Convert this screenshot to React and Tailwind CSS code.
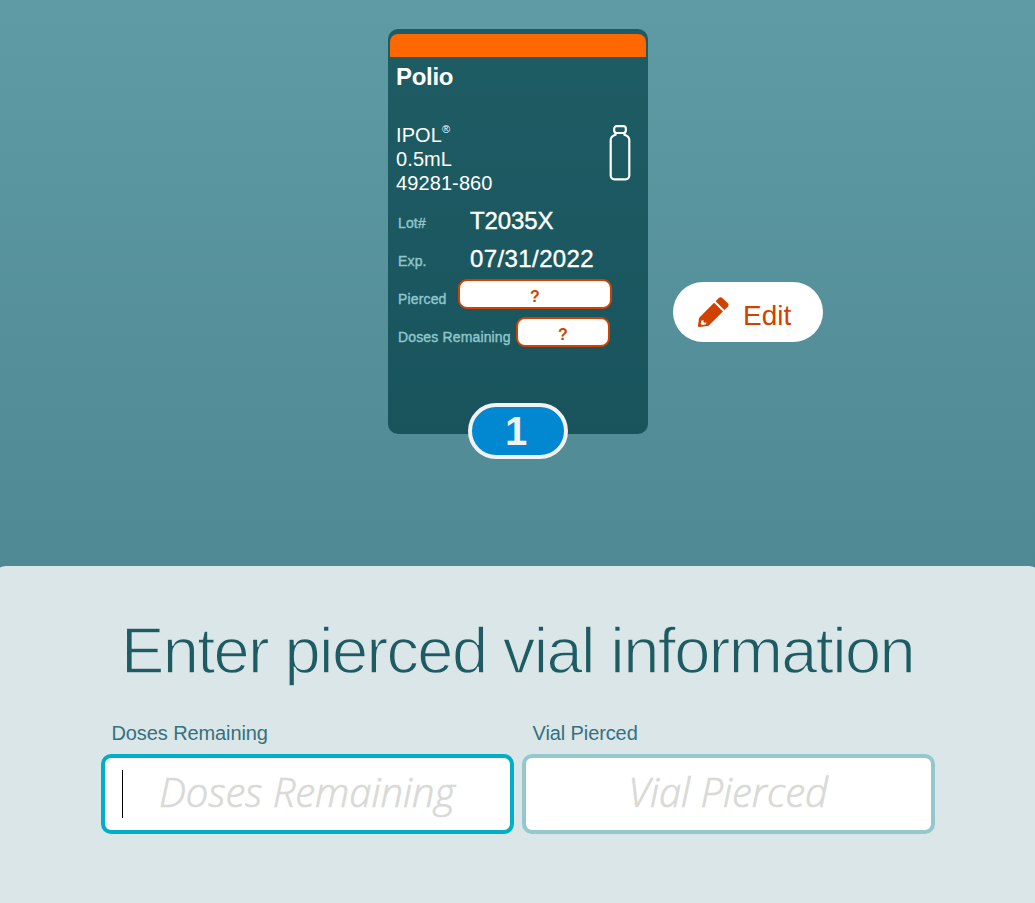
const vial = {
    name: 'Polio',
    brand: 'IPOL',
    dose: '0.5mL',
    ndc: '49281-860',
    lot: 'T2035X',
    exp: '07/31/2022',
    count: 1,
};

const VialIcon = () => (
    <svg className="mt-px" width="24" height="58" viewBox="0 0 24 58" fill="none" stroke="#fff" strokeWidth="2.2" strokeLinejoin="round">
        <rect x="6.2" y="2.2" width="11.6" height="6.8" rx="2.4" />
        <path d="M7.6 9v1.8C4.4 11.8 2.7 13.4 2.7 16v35.6a3.7 3.7 0 0 0 3.7 3.7h11.2a3.7 3.7 0 0 0 3.7-3.7V16c0-2.6-1.7-4.2-4.9-5.2V9" />
    </svg>
);

const PencilIcon = () => (
    <svg width="32" height="32" viewBox="0 0 32 32" fill="#d14200">
        <path d="M18.6 5.3 21.6 2.3c1.2-1.2 2.8-1.3 4-.1l5 4.9c1.3 1.2 1.3 2.7.1 3.9l-3.4 3.1z" />
        <path fillRule="evenodd" d="M17.1 6.7 25.9 15.5 12.3 29c-.6.7-1.1 1-2 1.1l-8 .9c-1 .1-1.5-.4-1.3-1.4l1-7c.1-.7.4-1.2.9-1.7zM4.4 24.6 3.7 27.8l1.2 1.1 3.8-.5.9-2-2.3.3-.9-.7.2-1.8z" />
    </svg>
);

const Row = ({ label, children }) => (
    <div className="flex h-[38px] items-start pl-[10px]">
        <span className="mt-[2px] whitespace-nowrap text-[14px] leading-[38px] tracking-[0.15px] text-[#8fc6cc] [-webkit-text-stroke:0.4px_#8fc6cc]">{label}</span>
        {children}
    </div>
);

const Value = ({ children, className }) => (
    <span className={`ml-auto w-[178px] text-2xl leading-[38px] [-webkit-text-stroke:0.4px_#fff] ${className}`}>{children}</span>
);

const Missing = ({ className }) => (
    <span className={`mt-px ml-auto h-[30px] rounded-[9px] border-2 border-[#d14200] bg-white pt-[2px] text-center text-base leading-[28px] font-bold text-[#d14200] ${className}`}>
        ?
    </span>
);

const Field = ({ label, className, active }) => (
    <label className="flex w-[413px] flex-col">
        <span className="pl-[11px] text-xl leading-6 tracking-[-0.1px] text-[#35717f]">{label}</span>
        <span className={`mt-[9px] flex h-20 items-center rounded-[10px] border-4 bg-white ${className}`}>
            <span className={`ml-[17px] h-12 w-px ${active ? 'bg-black' : 'bg-transparent'}`}></span>
            <input
                className="mr-[18px] mb-[5px] min-w-0 flex-1 text-center font-['Open_Sans',sans-serif] text-[40px] font-light text-[#d9d9d6] italic outline-none [-webkit-text-stroke:0.7px_#d9d9d6] placeholder:text-[#d9d9d6] placeholder:opacity-100"
                placeholder={label}
            />
        </span>
    </label>
);

const App = () => (
    <div className="flex h-[903px] w-[1035px] flex-col overflow-hidden bg-linear-to-b from-[#5e9ba5] to-[#4f8993] to-[566px] font-['Liberation_Sans',Arial,sans-serif]">
        <div className="flex h-[566px] shrink-0 items-start pt-[29px] pl-[388px]">
            <div className="flex h-[405px] w-[260px] shrink-0 flex-col rounded-[10px] bg-linear-to-b from-[#1e5c64] to-[#19545d] text-white">
                <div className="mx-[2px] mt-[5px] h-[23px] shrink-0 rounded-t-[8px] bg-[#ff6700]"></div>
                <h2 className="mt-[8px] pl-2 text-2xl leading-6 font-bold tracking-[-0.3px]">{vial.name}</h2>
                <div className="mt-[34px] flex h-[79px] shrink-0 items-start justify-between pr-4 pl-2">
                    <div className="text-xl leading-6 tracking-[0.1px]">
                        <p className="flex">
                            {vial.brand}
                            <span className="text-[11px] leading-3">®</span>
                        </p>
                        <p>{vial.dose}</p>
                        <p>{vial.ndc}</p>
                    </div>
                    <VialIcon />
                </div>
                <Row label="Lot#"><Value className="tracking-[-0.1px]">{vial.lot}</Value></Row>
                <Row label="Exp."><Value className="tracking-[0.4px]">{vial.exp}</Value></Row>
                <Row label="Pierced"><Missing className="mr-9 w-[154px]" /></Row>
                <Row label="Doses Remaining"><Missing className="mr-[38px] w-[94px]" /></Row>
                <div className="mt-[49px] flex h-14 w-[100px] shrink-0 items-center justify-center self-center rounded-full border-4 border-[#f2f2f2] bg-[#0288d1] pr-1 text-[40px] leading-none font-bold text-[#f2f2f2]">
                    {vial.count}
                </div>
            </div>
            <button className="mt-[253px] ml-[25px] flex h-[60px] w-[150px] items-center rounded-full bg-white pl-6 text-[28px] text-[#d14200]">
                <PencilIcon />
                <span className="mt-[7px] ml-[14px] leading-none">Edit</span>
            </button>
        </div>
        <div className="-mx-[6px] flex flex-1 flex-col items-center rounded-t-[12px] bg-[#dbe6e8]">
            <h1 className="mt-[45px] text-[65px] leading-[80px] tracking-[-1.62px] whitespace-nowrap text-[#1e5c64] [-webkit-text-stroke:1.4px_#dbe6e8]">
                Enter pierced vial information
            </h1>
            <div className="mt-[30px] flex gap-2">
                <Field label="Doses Remaining" className="border-[#00aec7]" active />
                <Field label="Vial Pierced" className="border-[#95c8ce]" />
            </div>
        </div>
    </div>
);

export default App;
